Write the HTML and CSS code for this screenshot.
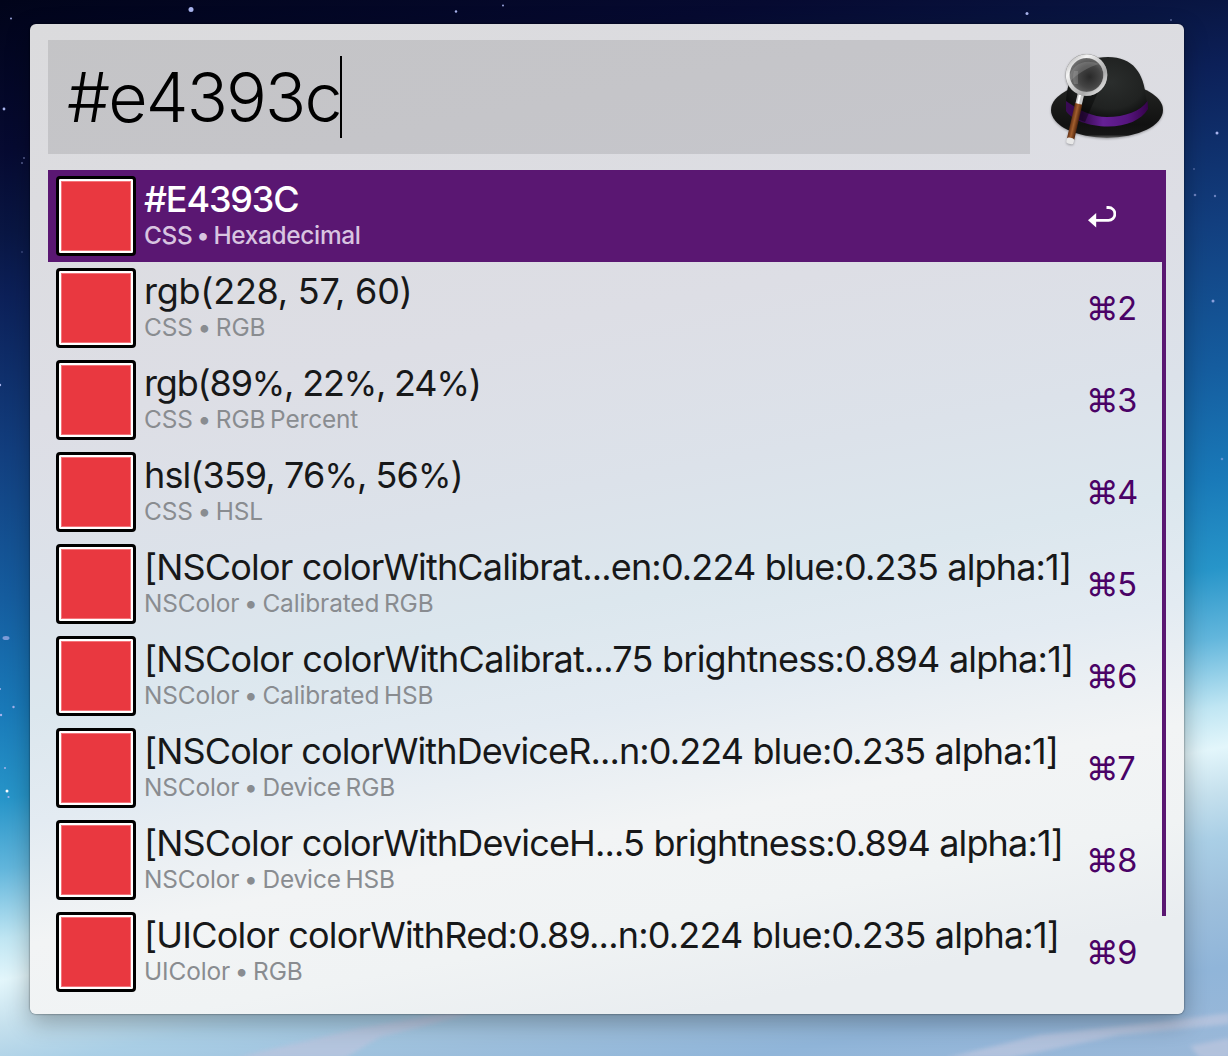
FILE: index.html
```html
<!DOCTYPE html>
<html lang="en">
<head>
<meta charset="utf-8">
<title>Colors</title>
<link rel="stylesheet" href="styles.css">
</head>
<body>
<svg class="sky" viewBox="0 0 1228 1056" aria-hidden="true">
  <defs><filter id="soft" x="-10%" y="-50%" width="120%" height="200%"><feGaussianBlur stdDeviation="2.2"/></filter></defs>
  <g fill="#b9c5de" opacity=".8" filter="url(#soft)">
    <path d="M235 1058L360 1028L452 1012L475 1012L420 1027L380 1037L345 1058Z"/>
    <path d="M945 1058L1040 1035L1140 1024L1230 1013V1024L1120 1035L1010 1058Z"/>
    <path d="M1190 1046L1230 1038V1058H1200Z"/>
  </g>
  <g fill="#a9b4ee">
    <ellipse cx="191" cy="9.500" rx="2.500" ry="2.500"/><circle cx="1027" cy="13.500" r="1.500"/>
    <circle cx="456" cy="11.500" r="1.200"/><circle cx="503" cy="5.500" r=".9"/><circle cx="11" cy="18.500" r=".9"/>
    <circle cx="4" cy="109" r="1.400"/><circle cx="24" cy="158" r="1" opacity=".5"/><circle cx="22" cy="163" r="1" opacity=".5"/>
    <circle cx="22" cy="252" r="1" opacity=".3"/><circle cx="0" cy="385" r="1.200"/><ellipse cx="6" cy="638" rx="3.500" ry="2" opacity=".7"/>
    <circle cx="0" cy="689" r="1"/><circle cx="13.500" cy="707" r="1.200"/><circle cx="1" cy="715" r="1.200"/>
    <circle cx="5" cy="768" r="1"/><circle cx="7" cy="791" r="1.500" fill="#fff"/><circle cx="8.500" cy="797" r="1.100"/>
    <circle cx="1217" cy="133" r="1.500"/><circle cx="1195" cy="195" r="1.300" opacity=".6"/><circle cx="1215" cy="196" r="1.200" opacity=".6"/>
    <circle cx="1194" cy="169" r="1" opacity=".4"/><circle cx="1213" cy="301" r="1.500" opacity=".8"/><circle cx="1222" cy="459" r="1.300" opacity=".5"/>
    <circle cx="1171" cy="20" r="1" opacity=".5"/>
  </g>
</svg>
<main class="panel">
  <header class="search">
    <div class="field"><span class="query">#e4393c</span><span class="caret"></span></div>
    <svg class="hat" viewBox="0 0 120 100" aria-hidden="true">
      <defs>
        <radialGradient id="crown" cx=".55" cy=".4" r=".6"><stop offset="0" stop-color="#2b2e2d"/><stop offset=".7" stop-color="#202221"/><stop offset="1" stop-color="#0e0f0f"/></radialGradient>
        <linearGradient id="brim" x1="0" y1="0" x2="0" y2="1"><stop offset="0" stop-color="#252625"/><stop offset=".75" stop-color="#111"/><stop offset=".94" stop-color="#161616"/><stop offset="1" stop-color="#666"/></linearGradient>
        <linearGradient id="band"><stop offset="0" stop-color="#3a0b55"/><stop offset=".2" stop-color="#34094d"/><stop offset=".45" stop-color="#662096"/><stop offset=".75" stop-color="#56157f"/><stop offset="1" stop-color="#36024b"/></linearGradient>
        <linearGradient id="rim" x1="0" y1="0" x2="1" y2="1"><stop offset="0" stop-color="#aaa"/><stop offset=".25" stop-color="#f5f5f5"/><stop offset=".5" stop-color="#c8c8c8"/><stop offset=".7" stop-color="#aaa"/><stop offset="1" stop-color="#f5f5f5"/></linearGradient>
        <radialGradient id="lens" cx=".58" cy=".55" r=".6"><stop offset="0" stop-color="#292929"/><stop offset=".5" stop-color="#444"/><stop offset="1" stop-color="#7a7a7a"/></radialGradient>
        <linearGradient id="wood"><stop offset="0" stop-color="#633014"/><stop offset=".45" stop-color="#a35f2e"/><stop offset="1" stop-color="#4d220b"/></linearGradient>
      </defs>
      <ellipse cx="61" cy="60" rx="56" ry="28" fill="url(#brim)"/>
      <path d="M20 56C20 22 36 7 62 7C87 7 98 23 100 48L101 52C95 63 80 70 60 70C42 70 28 66 20 56Z" fill="url(#crown)"/>
      <path d="M20 51C34 61 47 67 61 67C79 67 95 61 101.500 51L102 59C95 70 81 76.500 62 76.500C43 76.500 26 70 20 61Z" fill="url(#band)"/>
      <path d="M35 48L52 42L39 72L31 69Z" opacity=".4"/>
      <g transform="rotate(13 34 47)">
        <rect x="31" y="43" width="6.500" height="12" fill="#c8c8c8"/><rect x="32.500" y="43" width="2" height="12" fill="#fff"/>
        <rect x="30.600" y="54" width="7.400" height="36" fill="url(#wood)"/>
        <rect x="30.600" y="89" width="7.400" height="6" rx="2" fill="#e8e8e8"/>
      </g>
      <circle cx="40.500" cy="25" r="18.500" fill="url(#lens)"/>
      <path d="M23 29C25 14 39 8 53 14C43 17 31 23 23 33Z" fill="#aaa" opacity=".3"/>
      <path d="M28 21Q26 27 28 34H32V21Z" fill="#bbb" opacity=".25"/>
      <circle cx="40.500" cy="25" r="18.800" fill="none" stroke="#888" stroke-width="4.200"/>
      <circle cx="40.500" cy="25" r="18.800" fill="none" stroke="url(#rim)" stroke-width="3.800"/>
    </svg>
  </header>
  <section class="results">
    <ul class="list">
      <li class="row selected"><span class="swatch"></span><div class="text"><div class="title hex">#E4393C</div><div class="sub">CSS • Hexadecimal</div></div>
        <svg class="enter" viewBox="0 0 28 22" aria-hidden="true"><path d="M18.500 1.500H20.500A6.400 6.400 0 0 1 20.500 14.300H7" fill="none" stroke="#fff" stroke-width="2.800"/><path d="M0 14.300L8.200 7V21.500Z" fill="#fff"/></svg></li>
      <li class="row"><span class="swatch"></span><div class="text"><div class="title short">rgb(228, 57, 60)</div><div class="sub">CSS • RGB</div></div><span class="key">⌘2</span></li>
      <li class="row"><span class="swatch"></span><div class="text"><div class="title percent">rgb(89<span class="pct">%</span>, 22<span class="pct">%</span>, 24<span class="pct">%</span>)</div><div class="sub">CSS • RGB Percent</div></div><span class="key">⌘3</span></li>
      <li class="row"><span class="swatch"></span><div class="text"><div class="title hsl">hsl(359, 76<span class="pct">%</span>, 56<span class="pct">%</span>)</div><div class="sub">CSS • HSL</div></div><span class="key">⌘4</span></li>
      <li class="row"><span class="swatch"></span><div class="text"><div class="title">[NSColor colorWithCalibrat...en:0.224 blue:0.235 alpha:1]</div><div class="sub">NSColor • Calibrated RGB</div></div><span class="key">⌘5</span></li>
      <li class="row"><span class="swatch"></span><div class="text"><div class="title hsb">[NSColor colorWithCalibrat...75 brightness:0.894 alpha:1]</div><div class="sub">NSColor • Calibrated HSB</div></div><span class="key">⌘6</span></li>
      <li class="row"><span class="swatch"></span><div class="text"><div class="title device">[NSColor colorWithDeviceR...n:0.224 blue:0.235 alpha:1]</div><div class="sub">NSColor • Device RGB</div></div><span class="key">⌘7</span></li>
      <li class="row"><span class="swatch"></span><div class="text"><div class="title">[NSColor colorWithDeviceH...5 brightness:0.894 alpha:1]</div><div class="sub">NSColor • Device HSB</div></div><span class="key">⌘8</span></li>
      <li class="row"><span class="swatch"></span><div class="text"><div class="title uicolor">[UIColor colorWithRed:0.89...n:0.224 blue:0.235 alpha:1]</div><div class="sub">UIColor • RGB</div></div><span class="key">⌘9</span></li>
    </ul>
    <div class="scrollbar"></div>
  </section>
</main>
</body>
</html>
```
FILE: styles.css
```css
* { box-sizing: border-box; }
body {
  margin: 0;
  width: 1228px;
  height: 1056px;
  overflow: hidden;
  padding: 24px 44px 42px 30px;
  font-family: Inter, "Liberation Sans", sans-serif;
  background: linear-gradient(169.2deg, #01041a 0%, #060a31 11.6%, #091643 18.1%, #0c2058 23%, #123e7e 35%, #155d9f 46.5%, #1979b8 55%, #2795c9 62%, #62b6dc 67.4%, #c0e6f3 72.8%, #e3f6fb 76%, #c5e0ed 79.5%, #aacfe6 83%, #9dbfdc 87.9%, #90b5d9 93%, #9bb8d8 100%);
}
.sky { position: absolute; left: 0; top: 0; width: 1228px; height: 1056px; }
.panel {
  position: relative;
  height: 990px;
  padding: 16px 18px;
  border-radius: 6px;
  background: linear-gradient(169.2deg, #dbdbdd 0%, #dcdce0 15%, #dddee5 33%, #dce2ea 47%, #dce7ee 57%, #e3ebf2 66%, #f2f4f5 76%, #f0f3f4 84%, #e9edf0 92%, #e9edf0 100%);
  box-shadow: 0 0 2px rgba(0, 0, 0, .65), 0 8px 24px rgba(0, 0, 0, .3);
}
.search { display: flex; height: 114px; gap: 16px; }
.field {
  flex: none;
  width: 982px;
  display: flex;
  align-items: center;
  padding-left: 19px;
  background: rgba(0, 0, 0, .1);
}
.query { font-size: 68px; font-weight: 300; line-height: 82px; letter-spacing: -1.85px; width: 273px; white-space: nowrap; }
.caret { width: 2px; height: 82px; background: #000; }
.hat { width: 120px; height: 100px; margin-top: 10px; filter: drop-shadow(0 1px 1px rgba(0, 0, 0, .3)); }
.results { display: flex; margin-top: 16px; }
.list { margin: 0; padding: 0; list-style: none; width: 1114px; }
.row { height: 92px; display: flex; padding: 6px 0 0 8px; }
.swatch {
  flex: none;
  width: 80px;
  height: 80px;
  border: 3px solid #000;
  border-radius: 4px;
  background: #e93840;
  box-shadow: inset 0 0 0 2px #fff, inset 0 0 0 3px #f4747a;
}
.text { width: 950px; padding-left: 8px; flex: none; }
.title { font-size: 36px; line-height: 46px; color: #171819; white-space: nowrap; letter-spacing: -.84px; }
.title.hsb { letter-spacing: -.77px; }
.title.device { letter-spacing: -.88px; }
.title.uicolor { letter-spacing: -.8px; }
.title.short { letter-spacing: -.25px; }
.title.percent { letter-spacing: -1.17px; }
.title.hsl { letter-spacing: -.9px; }
.title.hex { letter-spacing: -1.15px; }
.pct { font-size: 34px; line-height: 1; }
.sub { font-size: 24.4px; line-height: 28px; margin-top: -1px; color: #898c90; white-space: nowrap; letter-spacing: -.12px; word-spacing: -2px; }
.key { font-size: 32.5px; line-height: 40px; margin-top: 21px; color: #4a0266; letter-spacing: -1.2px; }
.selected { background: #5a1772; }
.selected .title { color: #fff; font-weight: 500; }
.selected .sub { color: #d8c4e0; font-weight: 500; letter-spacing: -.32px; }
.enter { width: 28px; height: 22px; margin: 30px 0 0 2px; }
.scrollbar { width: 4px; height: 746px; background: #5a1772; }
```
